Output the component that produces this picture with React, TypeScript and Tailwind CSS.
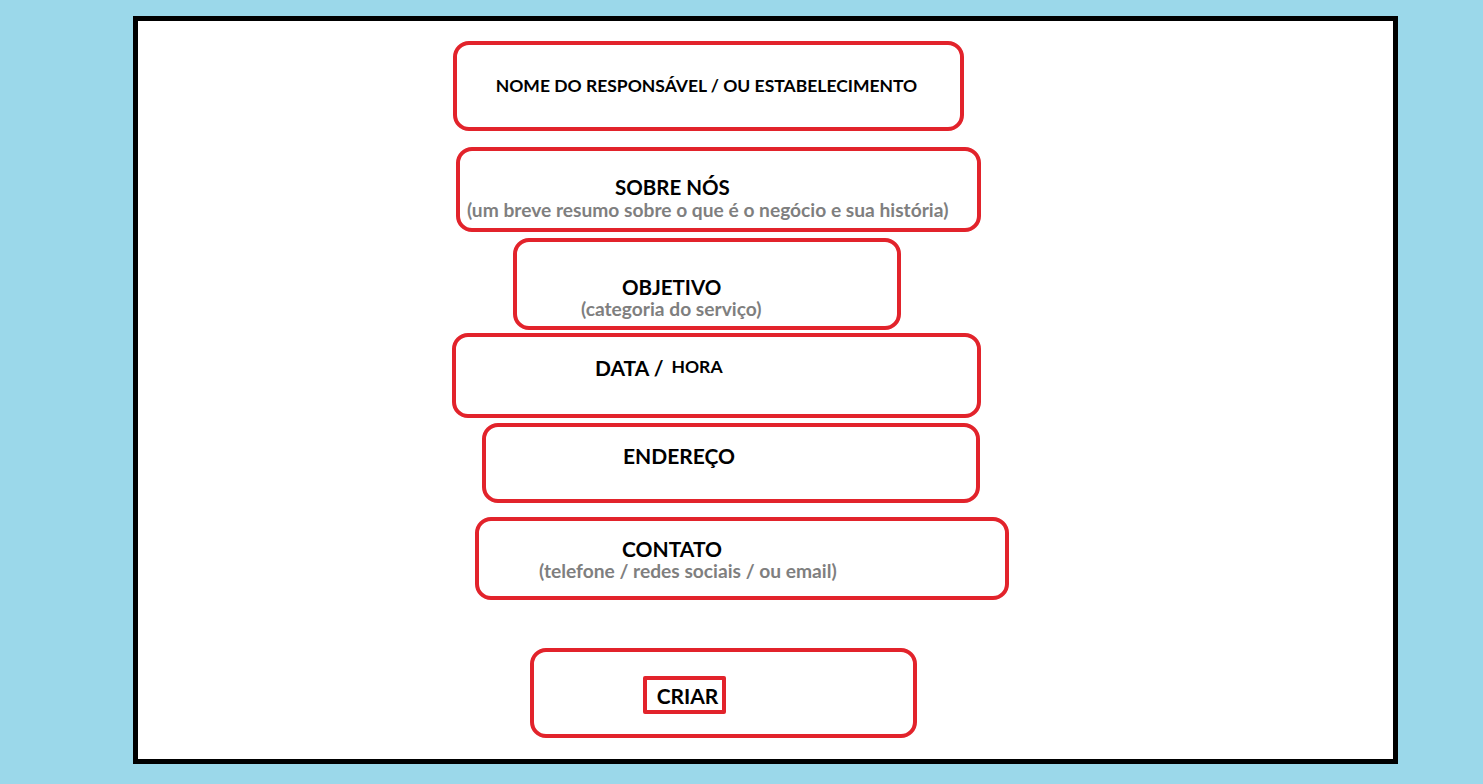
import React from 'react';

const box = 'border-4 border-[#e2232b] rounded-[16px] bg-white';
const title = 'font-bold text-black leading-none';
const sub = 'font-bold text-[#7f7f7f] leading-none';

export default function App() {
  return (
    <div className="w-[1483px] h-[784px] bg-[#9bd8ea] pt-[16px] pl-[133px] overflow-hidden" style={{ fontFamily: 'Lato, "Open Sans", sans-serif' }}>
      <div className="w-[1265px] h-[748px] border-[5px] border-black bg-white flex flex-col items-start">
        {/* nome */}
        <div className={`${box} ml-[315px] mt-[20px] w-[511px] h-[90px] flex items-center justify-center`}>
          <span className={`${title} text-[17.5px] -ml-[4px]`}>NOME DO RESPONSÁVEL / OU ESTABELECIMENTO</span>
        </div>

        {/* sobre nos */}
        <div className={`${box} ml-[318px] mt-[16px] w-[525px] h-[85px] flex flex-col items-start pt-[26px]`}>
          <span className={`${title} text-[20.5px] ml-[155px]`}>SOBRE NÓS</span>
          <span className={`${sub} text-[19.2px] ml-[7px] mt-[2px]`}>(um breve resumo sobre o que é o negócio e sua história)</span>
        </div>

        {/* objetivo */}
        <div className={`${box} ml-[375px] mt-[6px] w-[388px] h-[92px] flex flex-col items-start pt-[35px]`}>
          <span className={`${title} text-[20.5px] ml-[105px]`}>OBJETIVO</span>
          <span className={`${sub} text-[19.2px] ml-[64px] mt-[1px]`}>(categoria do serviço)</span>
        </div>

        {/* data / hora */}
        <div className={`${box} ml-[314px] mt-[3px] w-[529px] h-[85px] flex items-baseline pt-[20px]`}>
          <span className={`${title} text-[21px] ml-[139px]`}>DATA /</span>
          <span className={`${title} text-[17.5px] ml-[8px] -translate-y-[3px]`}>HORA</span>
        </div>

        {/* endereco */}
        <div className={`${box} ml-[344px] mt-[5px] w-[498px] h-[80px] flex items-start pt-[18px]`}>
          <span className={`${title} text-[21px] ml-[137px]`}>ENDEREÇO</span>
        </div>

        {/* contato */}
        <div className={`${box} ml-[337px] mt-[14px] w-[534px] h-[83px] flex flex-col items-start pt-[17px]`}>
          <span className={`${title} text-[21px] ml-[143px]`}>CONTATO</span>
          <span className={`${sub} text-[19.2px] ml-[60px] mt-[2px]`}>(telefone / redes sociais / ou email)</span>
        </div>

        {/* criar */}
        <div className={`${box} ml-[392px] mt-[48px] w-[387px] h-[90px] flex items-start pt-[24px]`}>
          <button className="ml-[109px] w-[83px] h-[38px] border-4 border-[#e2232b] rounded-[2px] bg-white flex items-center justify-center">
            <span className={`${title} text-[21px] ml-[6px]`}>CRIAR</span>
          </button>
        </div>
      </div>
    </div>
  );
}
